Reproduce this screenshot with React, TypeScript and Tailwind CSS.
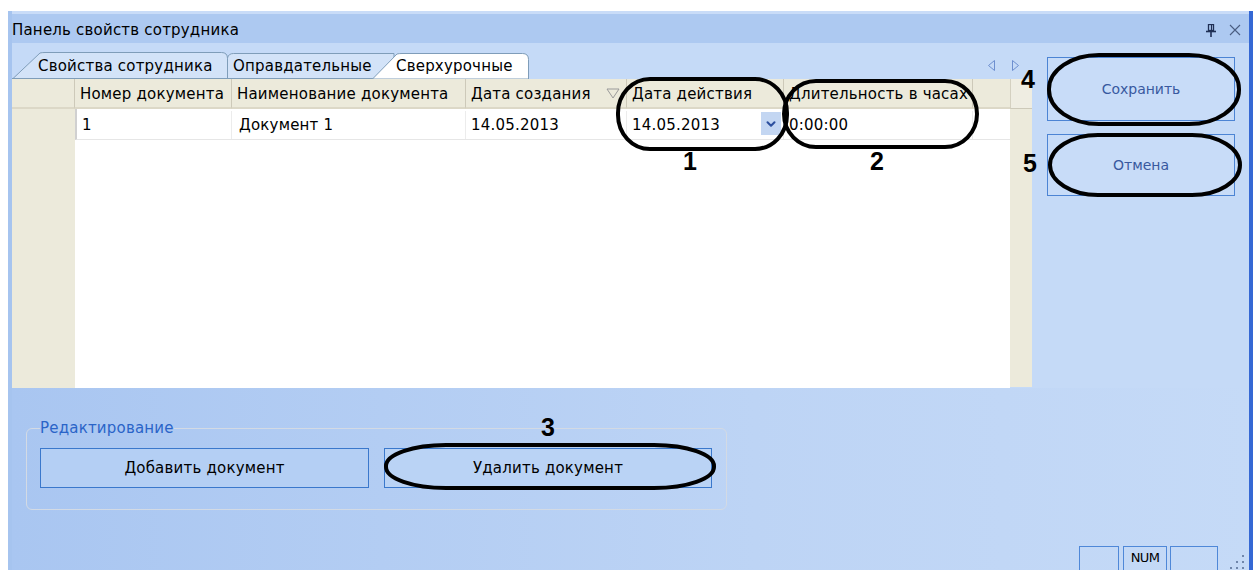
import React from "react";
import { ChevronDown } from "lucide-react";

const headerCols: { w: string; label: string; sort?: boolean }[] = [
  { w: "w-[157px]", label: "Номер документа" },
  { w: "w-[234px]", label: "Наименование документа" },
  { w: "w-[161px]", label: "Дата создания", sort: true },
  { w: "w-[157px]", label: "Дата действия" },
  { w: "w-[189px]", label: "Длительность в часах" },
];

function Tabs() {
  return (
    <div className="relative h-[36px] shrink-0">
      <svg className="absolute inset-0" width="1020" height="36" viewBox="0 0 1020 36">
        <path d="M215.5 36 L215.5 15 Q216.5 10.5 221.5 10.5 L382 10.5 L382 36 Z" fill="#d3e3f8" stroke="#7f9db9" strokeWidth="1" />
        <path d="M0.5 36 L28 10 Q30 9.5 33 9.5 L209.5 9.5 Q215.5 9.5 215.5 15.5 L215.5 36 Z" fill="#d3e3f8" stroke="#7f9db9" strokeWidth="1" />
        <line x1="0" y1="35.5" x2="361" y2="35.5" stroke="#7f9db9" strokeWidth="1" />
        <path d="M360.5 36 L385 11 Q387 10.5 390 10.5 L510.5 10.5 Q516.5 10.5 516.5 16.5 L516.5 36 Z" fill="#ffffff" stroke="#7f9db9" strokeWidth="1" />
        <path d="M982.5 17.5 L976.5 22.5 L982.5 27.5 Z" fill="none" stroke="#6d8fd0" strokeWidth="1" />
        <path d="M1000.5 17.5 L1006.5 22.5 L1000.5 27.5 Z" fill="none" stroke="#6d8fd0" strokeWidth="1" />
      </svg>
      <div className="relative flex pl-[26px] pt-[14px] leading-[18px]">
        <span className="w-[195px] whitespace-nowrap">Свойства сотрудника</span>
        <span className="w-[163px] whitespace-nowrap">Оправдательные</span>
        <span className="whitespace-nowrap">Сверхурочные</span>
      </div>
    </div>
  );
}

function Grid() {
  return (
    <div className="h-[309px] shrink-0 flex flex-col">
      {/* header */}
      <div className="h-[30px] shrink-0 flex bg-[#eceadb]">
        <div className="w-[63px] border-r border-r-[#cdc9b9] border-b-2 border-b-[#dcd8c7]" />
        {headerCols.map((c) => (
          <div
            key={c.label}
            className={`${c.w} relative flex items-center pl-[5px] pt-[3px] whitespace-nowrap overflow-hidden border-r border-r-[#cdc9b9] border-b-2 border-b-[#dcd8c7]`}
          >
            {c.label}
            {c.sort && (
              <svg className="absolute right-[6px] top-[9px]" width="14" height="11" viewBox="0 0 14 11">
                <path d="M1 1 L13 1 L7 10 Z" fill="none" stroke="#9a9a9a" strokeWidth="1" />
              </svg>
            )}
          </div>
        ))}
        <div className="w-[37px] border-b-2 border-b-[#dcd8c7]" />
        <div className="w-[22px] bg-[#efede2] border-l border-l-[#d4d0c0] border-b border-b-[#cdc9b9]" />
      </div>
      {/* body */}
      <div className="flex-1 flex">
        <div className="w-[63px] bg-[#eceadb]" />
        <div className="w-[935px] bg-white flex flex-col">
          <div className="h-[31px] flex border-b border-b-[#e6e6e6] border-l-2 border-l-[#d0d0d0] whitespace-nowrap pt-[2px]">
            <div className="w-[155px] pl-[5px] flex items-center border-r border-r-[#ececec]">1</div>
            <div className="w-[234px] pl-[7px] flex items-center border-r border-r-[#ececec]">Документ 1</div>
            <div className="w-[161px] pl-[5px] flex items-center border-r border-r-[#ececec]">14.05.2013</div>
            <div className="w-[157px] pl-[5px] flex items-center border-r border-r-[#ececec] relative">
              14.05.2013
              <div className="absolute right-[2px] top-[1px] w-[20px] h-[23px] bg-[#c3d6f2] flex items-center justify-center">
                <ChevronDown size={14} strokeWidth={3.5} className="text-[#2c4f9e]" />
              </div>
            </div>
            <div className="w-[189px] pl-[5px] flex items-center border-r border-r-[#ececec]">0:00:00</div>
            <div className="flex-1" />
          </div>
        </div>
        <div className="w-[22px] bg-[#eceadb] mb-[1px]" />
      </div>
    </div>
  );
}

export default function App() {
  return (
    <div className="relative w-[1256px] h-[570px] overflow-hidden bg-white font-['DejaVu_Sans','Liberation_Sans',sans-serif] text-[15px] tracking-[0.2px] text-black">
      <div className="ml-[8px] mt-[11px] w-[1245px] h-[559px] flex flex-col border-l-4 border-l-[#a6c4ef] border-r-4 border-r-[#3568d4]">
        {/* title bar */}
        <div className="h-[32px] shrink-0 flex items-center bg-[#adc9f1] border-t-[3px] border-t-[#c9dcf8] pr-[8px]">
          <span className="pt-[4px] whitespace-nowrap">Панель свойств сотрудника</span>
          <div className="ml-auto flex items-center gap-[13px] pt-[3px]">
            <svg width="10" height="13" viewBox="0 0 10 13">
              <rect x="2.5" y="0.5" width="5" height="6" fill="none" stroke="#1f2f55" strokeWidth="1.3" />
              <line x1="5.5" y1="1" x2="5.5" y2="6" stroke="#1f2f55" strokeWidth="1.2" />
              <line x1="0" y1="7.5" x2="10" y2="7.5" stroke="#1f2f55" strokeWidth="1.6" />
              <line x1="5" y1="8" x2="5" y2="13" stroke="#1f2f55" strokeWidth="1.6" />
            </svg>
            <svg width="12" height="12" viewBox="0 0 12 12">
              <path d="M1 1 L11 11 M11 1 L1 11" stroke="#4a5d82" strokeWidth="1.1" />
            </svg>
          </div>
        </div>

        {/* middle */}
        <div className="h-[345px] shrink-0 flex bg-[#c5daf7]">
          <div className="w-[1020px] flex flex-col">
            <Tabs />
            <Grid />
          </div>
          <div className="flex-1 flex flex-col pl-[15px] pt-[14px] gap-[13px] tracking-normal text-[14px]">
            <button className="w-[188px] h-[64px] border border-[#4c84d4] bg-[#c8dcf8] text-[#38599f] flex items-center justify-center">
              Сохранить
            </button>
            <button className="w-[188px] h-[62px] border border-[#4c84d4] bg-[#c8dcf8] text-[#38599f] flex items-center justify-center">
              Отмена
            </button>
          </div>
        </div>

        {/* bottom */}
        <div className="flex-1 flex flex-col overflow-hidden bg-linear-to-r from-[#a9c6f1] via-[#bdd4f5] via-60% to-[#c5daf7]">
          <fieldset className="mt-[31px] ml-[14px] w-[701px] border border-[#d3dae4] rounded-[6px] pl-[13px] pt-[11px] pb-[21px]">
            <legend className="px-0 leading-[18px] text-[#2a64c8]">Редактирование</legend>
            <div className="flex gap-[15px]">
              <button className="w-[329px] h-[40px] border border-[#3a78cc] bg-[#b4cff4] flex items-center justify-center">
                Добавить документ
              </button>
              <button className="w-[328px] h-[40px] border border-[#3a78cc] bg-[#bad3f5] flex items-center justify-center">
                Удалить документ
              </button>
            </div>
          </fieldset>
          <div className="mt-[36px] h-[26px] shrink-0 flex justify-end items-start">
            <div className="w-[40px] h-[26px] border border-[#4f88d8]" />
            <div className="ml-[4px] w-[44px] h-[26px] border border-[#4f88d8] flex items-center justify-center text-[13px] tracking-[-0.6px] pb-[2px]">
              NUM
            </div>
            <div className="ml-[3px] w-[48px] h-[26px] border border-[#4f88d8]" />
            <div className="w-[31px] h-[24px] relative">
              <svg className="absolute right-[3px] bottom-[0px]" width="18" height="18" viewBox="0 0 18 18">
                <rect x="14" y="3" width="2" height="2" fill="#6f86ab" />
                <rect x="8" y="9" width="2" height="2" fill="#6f86ab" />
                <rect x="14" y="9" width="2" height="2" fill="#6f86ab" />
                <rect x="2" y="15" width="2" height="2" fill="#6f86ab" />
                <rect x="8" y="15" width="2" height="2" fill="#6f86ab" />
                <rect x="14" y="15" width="2" height="2" fill="#6f86ab" />
              </svg>
            </div>
          </div>
        </div>
      </div>

      {/* annotations */}
      <svg className="absolute inset-0 pointer-events-none" width="1256" height="570" viewBox="0 0 1256 570">
        <rect x="618" y="79" width="169" height="70" rx="32" ry="34" fill="none" stroke="#000" strokeWidth="4" />
        <rect x="784" y="81" width="193" height="66" rx="32" ry="33" fill="none" stroke="#000" strokeWidth="4" />
        <rect x="1049" y="55" width="190" height="69" rx="50" ry="34" fill="none" stroke="#000" strokeWidth="4" />
        <rect x="1050" y="135" width="190" height="60" rx="48" ry="30" fill="none" stroke="#000" strokeWidth="4" />
        <rect x="386" y="445" width="328" height="43" rx="60" ry="21" fill="none" stroke="#000" strokeWidth="4" />
      </svg>
      <div className="absolute inset-0 pointer-events-none font-['Liberation_Sans',sans-serif] font-bold text-[25px] leading-none tracking-normal">
        <span className="absolute left-[683px] top-[149px]">1</span>
        <span className="absolute left-[870px] top-[149px]">2</span>
        <span className="absolute left-[541px] top-[415px]">3</span>
        <span className="absolute left-[1021px] top-[67px]">4</span>
        <span className="absolute left-[1023px] top-[151px]">5</span>
      </div>
    </div>
  );
}
